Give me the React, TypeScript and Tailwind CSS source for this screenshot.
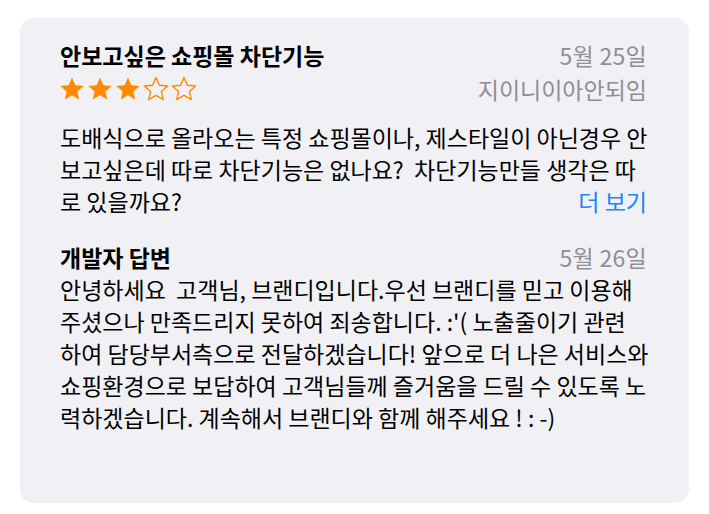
import React from 'react';

const font = { fontFamily: '"Noto Sans CJK KR", "Noto Sans", sans-serif' };

const Star: React.FC<{ filled: boolean }> = ({ filled }) => (
  <svg width="28" height="28" viewBox="0 0 24 24" className="text-[#ff8a00]">
    <path
      d="M12 2.2l2.9 6.6 7.1.6-5.4 4.7 1.6 7-6.2-3.7-6.2 3.7 1.6-7L2 9.4l7.1-.6z"
      fill={filled ? 'currentColor' : 'none'}
      stroke="currentColor"
      strokeWidth={filled ? 0 : 1.2}
      strokeLinejoin="round"
    />
  </svg>
);

const App: React.FC = () => {
  const review = [
    '도배식으로 올라오는 특정 쇼핑몰이나, 제스타일이 아닌경우 안',
    '보고싶은데 따로 차단기능은 없나요?  차단기능만들 생각은 따',
  ];
  const reply = [
    '안녕하세요  고객님, 브랜디입니다.우선 브랜디를 믿고 이용해',
    "주셨으나 만족드리지 못하여 죄송합니다. :'( 노출줄이기 관련",
    '하여 담당부서측으로 전달하겠습니다! 앞으로 더 나은 서비스와',
    '쇼핑환경으로 보답하여 고객님들께 즐거움을 드릴 수 있도록 노',
    '력하겠습니다. 계속해서 브랜디와 함께 해주세요 ! : -)',
  ];

  return (
    <div className="w-[709px] h-[514px] bg-white pt-[18px] px-[20px] pb-[11px]" style={font}>
      <div className="h-full rounded-[14px] bg-[#f1f0f5] pl-[40px] pr-[42px] pt-[22px]">
        <div className="flex justify-between">
          <div className="text-[23px] font-bold leading-[30px] text-black">안보고싶은 쇼핑몰 차단기능</div>
          <div className="text-[#8e8e93] text-[23px] leading-[30px] tracking-[0.3px]">5월 25일</div>
        </div>
        <div className="mt-[2px] flex justify-between items-center h-[34px]">
          <div className="flex -ml-[2px]">
            {[true, true, true, false, false].map((f, i) => (
              <Star key={i} filled={f} />
            ))}
          </div>
          <div className="text-[#8e8e93] text-[23px] leading-[34px]">지이니이아안되임</div>
        </div>

        <div className="mt-[15px] text-[23px] leading-[32px] text-black">
          {review.map((l, i) => (
            <div key={i} className="whitespace-pre">{l}</div>
          ))}
          <div className="flex justify-between">
            <span>로 있을까요?</span>
            <span className="text-[#1a86f7]">더 보기</span>
          </div>
        </div>

        <div className="mt-[25px] flex justify-between text-[23px] leading-[30px]">
          <span className="font-bold text-black">개발자 답변</span>
          <span className="text-[#8e8e93] tracking-[0.3px]">5월 26일</span>
        </div>
        <div className="mt-[1px] text-[23px] leading-[32px] text-black">
          {reply.map((l, i) => (
            <div key={i} className="whitespace-pre">{l}</div>
          ))}
        </div>
      </div>
    </div>
  );
};

export default App;
